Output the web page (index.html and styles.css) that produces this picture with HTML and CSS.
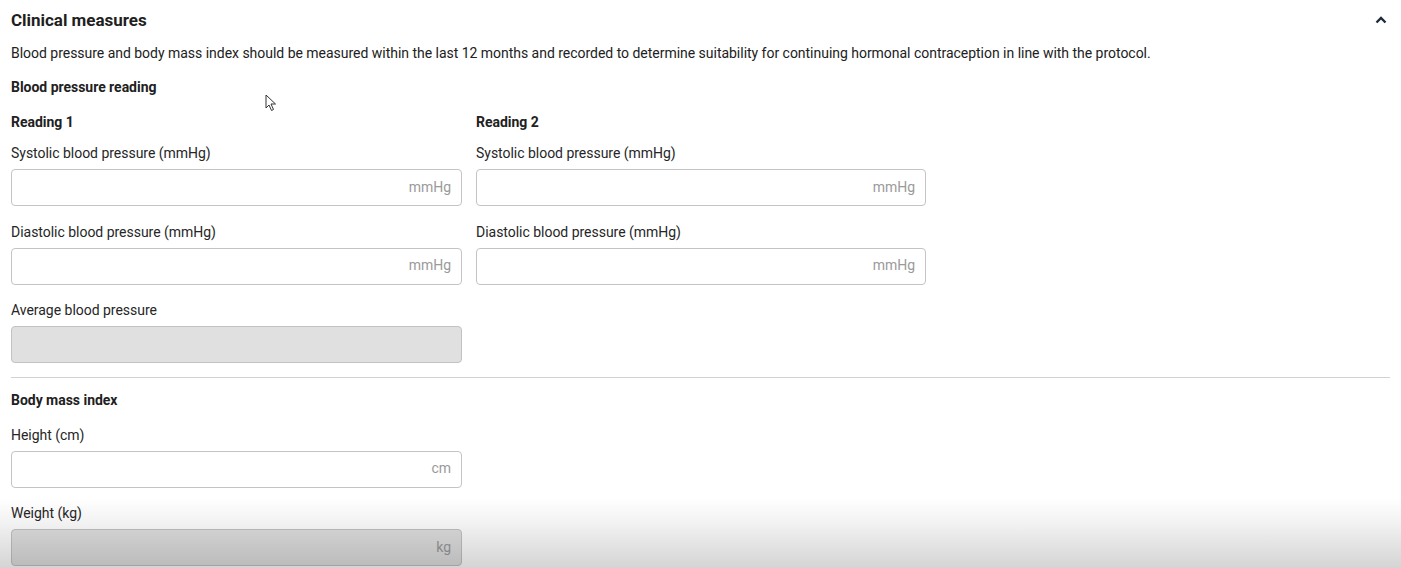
FILE: index.html
```html
<!DOCTYPE html>
<html lang="en">
<head>
<meta charset="utf-8">
<title>Clinical measures</title>
<link rel="stylesheet" href="styles.css">
</head>
<body>
<div class="page">
  <section class="panel">
    <header class="panel-head">
      <h2 class="panel-title">Clinical measures</h2>
      <button class="collapse" aria-label="Collapse">
        <svg width="12" height="8" viewBox="0 0 12 8"><path d="M1.5 6.5 L6 2 L10.5 6.5" fill="none" stroke="#1d2a3a" stroke-width="2.4"/></svg>
      </button>
    </header>
    <p class="desc">Blood pressure and body mass index should be measured within the last 12 months and recorded to determine suitability for continuing hormonal contraception in line with the protocol.</p>

    <h3 class="sub">Blood pressure reading</h3>
    <div class="cols">
      <div class="col">
        <h4 class="reading">Reading 1</h4>
        <div class="field">
          <label class="label">Systolic blood pressure (mmHg)</label>
          <div class="input"><span class="unit">mmHg</span></div>
        </div>
        <div class="field">
          <label class="label">Diastolic blood pressure (mmHg)</label>
          <div class="input"><span class="unit">mmHg</span></div>
        </div>
        <div class="field">
          <label class="label">Average blood pressure</label>
          <div class="input disabled"></div>
        </div>
      </div>
      <div class="col">
        <h4 class="reading">Reading 2</h4>
        <div class="field">
          <label class="label">Systolic blood pressure (mmHg)</label>
          <div class="input"><span class="unit">mmHg</span></div>
        </div>
        <div class="field">
          <label class="label">Diastolic blood pressure (mmHg)</label>
          <div class="input"><span class="unit">mmHg</span></div>
        </div>
      </div>
    </div>

    <hr class="divider">

    <h3 class="sub bmi">Body mass index</h3>
    <div class="col single">
      <div class="field">
        <label class="label">Height (cm)</label>
        <div class="input"><span class="unit">cm</span></div>
      </div>
      <div class="field">
        <label class="label">Weight (kg)</label>
        <div class="input disabled"><span class="unit">kg</span></div>
      </div>
    </div>
  </section>

  <svg class="cursor" width="12" height="18" viewBox="0 0 12 18"><path d="M1 1 L1 14 L4 11 L6.5 16.5 L8.5 15.5 L6 10 L10.5 10 Z" fill="#fff" stroke="#333" stroke-width="1"/></svg>
  <div class="shade"></div>
</div>
</body>
</html>
```

FILE: styles.css
```css
* { box-sizing: border-box; }
html, body {
  margin: 0;
  padding: 0;
  background: #fff;
}
body {
  font-family: Roboto, "Liberation Sans", Arial, sans-serif;
  color: #212121;
  font-size: 14px;
  line-height: 20px;
  letter-spacing: -0.025px;
}
.page {
  position: relative;
  width: 1401px;
  height: 568px;
  overflow: hidden;
}
.panel {
  padding: 8px 11px 0 11px;
}
.panel-head {
  display: flex;
  align-items: center;
  justify-content: space-between;
  height: 24px;
}
.panel-title {
  margin: 0;
  font-size: 17px;
  font-weight: 700;
  line-height: 24px;
  color: #1f1f1f;
}
.collapse {
  border: 0;
  background: none;
  padding: 0;
  margin-right: 2px;
  width: 14px;
  height: 14px;
  display: flex;
  align-items: center;
  justify-content: center;
}
.desc {
  margin: 11px 0 0 0;
  font-size: 14px;
  line-height: 20px;
}
.sub {
  margin: 14px 0 0 0;
  font-size: 14px;
  font-weight: 700;
  line-height: 20px;
}
.cols {
  display: grid;
  grid-template-columns: 451px 450px;
  column-gap: 14px;
  margin-top: 15px;
}
.col {
  display: flex;
  flex-direction: column;
}
.col.single {
  width: 451px;
  margin-top: 15px;
}
.reading {
  margin: 0 0 11px 0;
  font-size: 14px;
  font-weight: 700;
  line-height: 20px;
}
.field {
  display: flex;
  flex-direction: column;
  margin-bottom: 15.5px;
}
.label {
  font-size: 14px;
  line-height: 20px;
  color: #262626;
}
.input {
  margin-top: 6px;
  height: 37px;
  border: 1px solid #c4c4c4;
  border-radius: 4px;
  background: #fff;
  display: flex;
  align-items: center;
  justify-content: flex-end;
  padding: 0 10px 2px 0;
}
.input.disabled {
  background: #e0e0e0;
  border-color: #c2c2c2;
}
.unit {
  color: #9a9a9a;
  font-size: 14px;
}
.divider {
  margin: -2px 0 0 0;
  border: 0;
  border-top: 1px solid #d2d2d2;
  width: 1379px;
}
.sub.bmi {
  margin-top: 12px;
}
.cursor {
  position: absolute;
  left: 265px;
  top: 94px;
}
.shade {
  position: absolute;
  left: 0;
  right: 0;
  bottom: 0;
  height: 70px;
  background: linear-gradient(to bottom, rgba(0,0,0,0) 0%, rgba(0,0,0,0.05) 35%, rgba(0,0,0,0.17) 100%);
  pointer-events: none;
}
```
